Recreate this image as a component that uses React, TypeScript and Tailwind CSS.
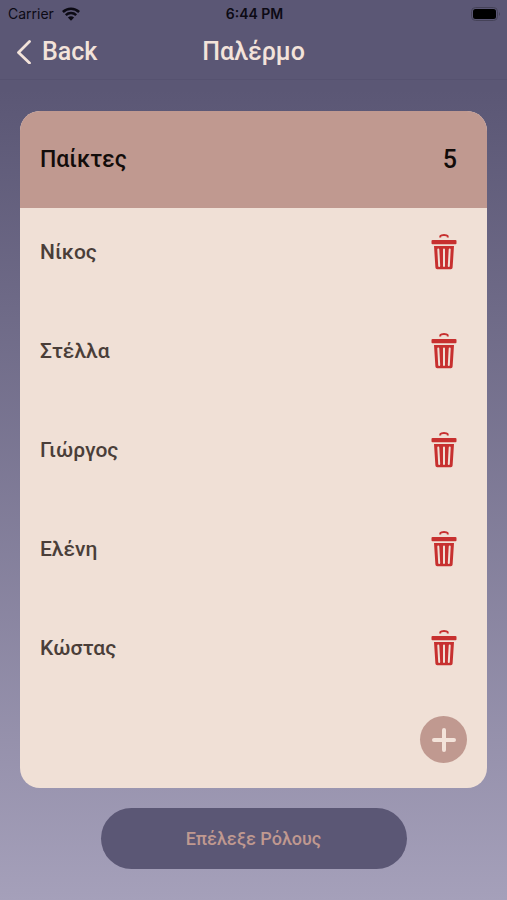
import { useState } from "react";

const initialPlayers = ["Νίκος", "Στέλλα", "Γιώργος", "Ελένη", "Κώστας"];

function TrashIcon() {
  return (
    <svg viewBox="0 0 26 36" className="h-9 w-6.5" fill="#c7302f" aria-hidden="true">
      <path
        d="M9.2 3.6V2.9Q9.2 1.7 10.5 1.4Q13 .8 15.5 1.4Q16.8 1.7 16.8 2.9V3.6"
        fill="none"
        stroke="#c7302f"
        strokeWidth="2"
      />
      <rect x=".5" y="6" width="25" height="4.2" rx="1" />
      <path d="M3 12H23L21.6 33.6Q21.5 35.3 19.8 35.3H6.2Q4.5 35.3 4.4 33.6Z" />
      <path
        d="M7.3 15.5L8.2 32M13 15.5V32M18.7 15.5L17.8 32"
        fill="none"
        stroke="#f0e0d6"
        strokeWidth="2"
        strokeLinecap="round"
      />
    </svg>
  );
}

function StatusBar() {
  return (
    <div className="grid h-7 grid-cols-3 items-center pr-1.5 pl-2 font-[Inter,sans-serif] text-sm text-[#0c0a14]">
      <div className="flex items-center gap-2">
        <span>Carrier</span>
        <svg viewBox="0 0 18 14" className="h-3.5 w-4.5" fill="none" stroke="currentColor" strokeWidth="2.5" aria-hidden="true">
          <path d="M.9 5C5.4 .6 12.6 .6 17.1 5" />
          <path d="M3.8 8.2C6.7 5.4 11.3 5.4 14.2 8.2" />
          <path d="M9 13.7L5.9 10.6Q9 8 12.1 10.6Z" fill="currentColor" stroke="none" />
        </svg>
      </div>
      <span className="text-center font-semibold">6:44 PM</span>
      <svg viewBox="0 0 30 14" className="h-3.5 w-7.5 justify-self-end" aria-hidden="true">
        <rect x=".5" y=".5" width="26" height="13" rx="4" fill="none" stroke="#454258" />
        <rect x="2" y="2" width="23" height="10" rx="2.5" fill="#000" />
        <path d="M28 5Q30 7 28 9Z" fill="#454258" />
      </svg>
    </div>
  );
}

function NavBar() {
  return (
    <nav className="grid h-13 grid-cols-[1fr_auto_1fr] items-center border-b border-[#565270] px-4 pb-1 text-[#f3e3da]">
      <button type="button" className="flex items-center gap-2.5 text-[25px] leading-8 font-medium">
        <svg viewBox="0 0 16 24" className="h-6 w-4" fill="none" stroke="currentColor" strokeWidth="2.8" aria-hidden="true">
          <path d="M13.5 1.5L2.5 12.5L13.5 23" strokeLinecap="round" strokeLinejoin="round" />
        </svg>
        Back
      </button>
      <h1 className="text-[25px] leading-8 font-medium">Παλέρμο</h1>
    </nav>
  );
}

export default function App() {
  const [players, setPlayers] = useState(initialPlayers);

  const removePlayer = (index: number) => setPlayers(players.filter((_, i) => i !== index));
  const addPlayer = () => setPlayers([...players, "Παίκτης"]);

  return (
    <div className="flex min-h-screen flex-col bg-linear-to-b from-[#5b5775] from-10% to-[#a5a0ba] font-[Roboto,sans-serif]">
      <header className="bg-[#5b5775]">
        <StatusBar />
        <NavBar />
      </header>

      <main className="flex flex-1 flex-col items-center px-5 pt-[31px] pb-8">
        <section className="w-full overflow-hidden rounded-[20px] bg-[#f0e0d6]">
          <div className="flex h-[97px] items-center justify-between bg-[#c09990] pr-7.5 pl-5 font-medium text-[#120c0a]">
            <h2 className="text-[23px] leading-8">Παίκτες</h2>
            <span className="text-[25px] leading-8">{players.length}</span>
          </div>

          <ul className="space-y-[11px]">
            {players.map((player, index) => (
              <li key={index} className="flex h-22 items-center justify-between pr-7.5 pl-5">
                <span className="text-[21px] leading-8 font-medium text-[#4a3e39]">{player}</span>
                <button type="button" aria-label={`Διαγραφή ${player}`} onClick={() => removePlayer(index)}>
                  <TrashIcon />
                </button>
              </li>
            ))}
          </ul>

          <div className="flex justify-end pt-6 pr-5 pb-[25px]">
            <button
              type="button"
              aria-label="Προσθήκη παίκτη"
              onClick={addPlayer}
              className="flex size-[47px] items-center justify-center rounded-full bg-[#c09990] text-[#f3e3da]"
            >
              <svg viewBox="0 0 24 24" className="size-6" stroke="currentColor" strokeWidth="4" strokeLinecap="round" aria-hidden="true">
                <path d="M12 2V22M2 12H22" />
              </svg>
            </button>
          </div>
        </section>

        <button
          type="button"
          className="mt-5 h-[61px] w-[306px] max-w-full rounded-full bg-[#5b5775] text-lg font-medium text-[#c09990]"
        >
          Επέλεξε Ρόλους
        </button>
      </main>
    </div>
  );
}
